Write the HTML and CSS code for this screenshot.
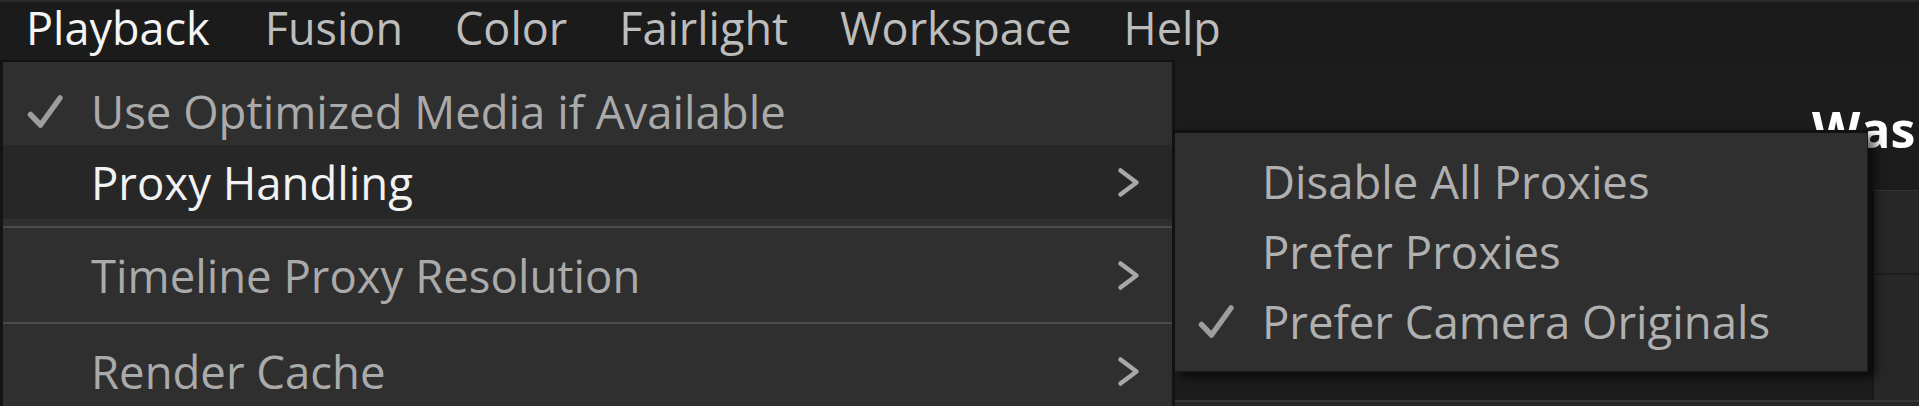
FILE: index.html
```html
<!DOCTYPE html>
<html>
<head>
<meta charset="utf-8">
<link rel="stylesheet" href="styles.css">
</head>
<body>
<div class="menubar">
  <span class="mb-item active">Playback</span>
  <span class="mb-item">Fusion</span>
  <span class="mb-item">Color</span>
  <span class="mb-item">Fairlight</span>
  <span class="mb-item">Workspace</span>
  <span class="mb-item">Help</span>
</div>
<div class="stage">
  <div class="backdrop">
    <div class="bd-title">Was</div>
    <div class="bd-panel"></div>
    <div class="bd-panel second"></div>
    <div class="bd-strip"></div>
  </div>

  <div class="menu main-menu">
    <div class="item">
      <span class="check"><svg width="36" height="35" viewBox="0 0 36 35"><path d="M3.5 20.5 L13.5 31 L33 4" fill="none" stroke="#9d9d9d" stroke-width="5.5" stroke-linecap="round" stroke-linejoin="round"/></svg></span>
      <span class="label">Use Optimized Media if Available</span>
    </div>
    <div class="item hover">
      <span class="check"></span>
      <span class="label">Proxy Handling</span>
      <span class="arrow"><svg width="23" height="31" viewBox="0 0 23 31"><path d="M3.5 3.5 L19.5 15.5 L3.5 27.5" fill="none" stroke="#a8a8a8" stroke-width="4.5" stroke-linecap="round" stroke-linejoin="round"/></svg></span>
    </div>
    <div class="sep"></div>
    <div class="item">
      <span class="check"></span>
      <span class="label">Timeline Proxy Resolution</span>
      <span class="arrow"><svg width="23" height="31" viewBox="0 0 23 31"><path d="M3.5 3.5 L19.5 15.5 L3.5 27.5" fill="none" stroke="#a8a8a8" stroke-width="4.5" stroke-linecap="round" stroke-linejoin="round"/></svg></span>
    </div>
    <div class="sep"></div>
    <div class="item">
      <span class="check"></span>
      <span class="label">Render Cache</span>
      <span class="arrow"><svg width="23" height="31" viewBox="0 0 23 31"><path d="M3.5 3.5 L19.5 15.5 L3.5 27.5" fill="none" stroke="#a8a8a8" stroke-width="4.5" stroke-linecap="round" stroke-linejoin="round"/></svg></span>
    </div>
  </div>

  <div class="menu sub-menu">
    <div class="item">
      <span class="check"></span>
      <span class="label">Disable All Proxies</span>
    </div>
    <div class="item">
      <span class="check"></span>
      <span class="label">Prefer Proxies</span>
    </div>
    <div class="item">
      <span class="check"><svg width="36" height="35" viewBox="0 0 36 35"><path d="M3.5 20.5 L13.5 31 L33 4" fill="none" stroke="#9d9d9d" stroke-width="5.5" stroke-linecap="round" stroke-linejoin="round"/></svg></span>
      <span class="label">Prefer Camera Originals</span>
    </div>
  </div>
</div>
</body>
</html>
```

FILE: styles.css
```css
* { box-sizing: border-box; }

html, body {
  margin: 0;
  padding: 0;
}

body {
  width: 1919px;
  height: 406px;
  overflow: hidden;
  background: #1c1c1c;
  font-family: "Open Sans", sans-serif;
  font-size: 45px;
}

.menubar {
  height: 60px;
  display: flex;
  padding: 0;
  background: #1b1b1b;
  border-top: 2px solid #2a2a2a;
}

.mb-item {
  padding: 0 26px;
  line-height: 52px;
  color: #bdbdbd;
  white-space: nowrap;
}

.mb-item.active {
  color: #f4f4f4;
  padding-right: 29px;
}

.stage {
  position: relative;
  height: 346px;
}

.backdrop {
  display: flex;
  flex-direction: column;
  padding-top: 39px;
}

.bd-title {
  margin-left: 1812px;
  height: 60px;
  line-height: 60px;
  font-size: 50px;
  font-weight: 700;
  color: #ffffff;
  white-space: nowrap;
}

.bd-panel {
  margin-left: 1872px;
  height: 83px;
  margin-top: 31px;
  background: #272727;
  border-top: 1px solid #333333;
  border-left: 2px solid #181818;
}

.bd-panel.second {
  margin-top: 0;
  height: 127px;
  border-top: 2px solid #1d1d1d;
}

.bd-strip {
  height: 10px;
  background: #262626;
  border-top: 2px solid #363636;
}

.menu {
  position: absolute;
  background: #2f2f2f;
  color: #aaaaaa;
  font-size: 45.5px;
}

.main-menu {
  left: 0;
  top: 0;
  width: 1175px;
  height: 360px;
  border-top: 2px solid #121212;
  border-left: 3px solid #141414;
  border-right: 3px solid #141414;
  padding-top: 9px;
}

.sub-menu {
  left: 1172px;
  top: 70px;
  width: 696px;
  border-top: 3px solid #111111;
  border-left: 3px solid #111111;
  border-right: 1px solid #1a1a1a;
  border-bottom: 1px solid #1a1a1a;
  padding: 13px 0 15px;
  box-shadow: 8px 6px 8px rgba(0, 0, 0, 0.55);
  color: #b0b0b0;
}

.item {
  display: flex;
  align-items: center;
  padding: 7px 32px 6px 24px;
  line-height: 61px;
  white-space: nowrap;
}

.main-menu .item:first-child {
  padding-top: 10px;
  padding-bottom: 3px;
}

.sub-menu .item {
  padding: 5px 20px 4px 23px;
}

.item.hover {
  background: #272727;
  color: #f2f2f2;
}

.check {
  width: 36px;
  height: 35px;
  flex: 0 0 36px;
  margin-right: 28px;
  display: flex;
}

.sub-menu .check {
  margin-right: 28px;
}

.label {
  flex: 1 1 auto;
}

.arrow {
  width: 23px;
  height: 31px;
  display: flex;
}

.sep {
  height: 2px;
  margin: 7px 0 10px;
  background: #4a4a4a;
}

.item + .sep + .item + .sep {
  margin-top: 10px;
}
```
